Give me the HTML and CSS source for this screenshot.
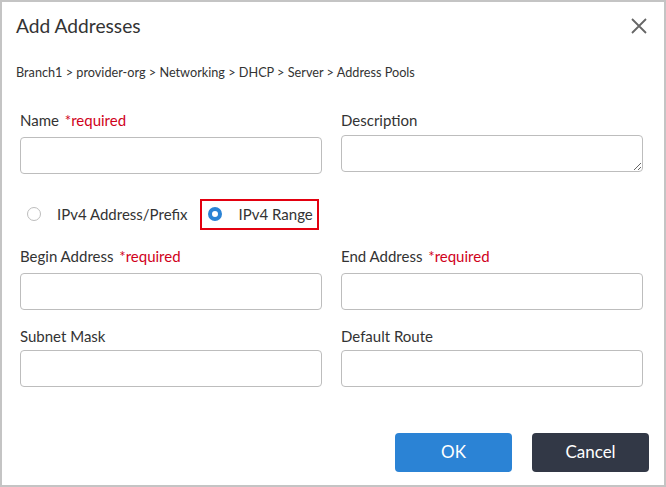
FILE: index.html
```html
<!DOCTYPE html>
<html lang="en">
<head>
    <meta charset="UTF-8">
    <meta name="viewport" content="width=device-width, initial-scale=1.0">
    <title>Add Addresses</title>
    <link rel="stylesheet" href="styles.css">
</head>
<body>
    <div class="dialog">
        <div class="header">
            <h1 class="title">Add Addresses</h1>
            <button class="close" type="button" aria-label="Close">
                <svg width="16" height="16" viewBox="0 0 16 16">
                    <path d="M1 1 L15 15 M15 1 L1 15" stroke="#666" stroke-width="1.8" fill="none"/>
                </svg>
            </button>
        </div>

        <div class="breadcrumb">Branch1 &gt; provider-org &gt; Networking &gt; DHCP &gt; Server &gt; Address Pools</div>

        <form class="form">
            <div class="row">
                <div class="field">
                    <label class="label">Name <span class="required">*required</span></label>
                    <input class="input" type="text">
                </div>
                <div class="field field-area">
                    <label class="label">Description</label>
                    <textarea class="input textarea"></textarea>
                </div>
            </div>

            <div class="radios">
                <label class="option">
                    <span class="radio"></span>
                    <span>IPv4 Address/Prefix</span>
                </label>
                <label class="option option-selected">
                    <span class="radio radio-checked"></span>
                    <span>IPv4 Range</span>
                </label>
            </div>

            <div class="row row-2">
                <div class="field">
                    <label class="label">Begin Address <span class="required">*required</span></label>
                    <input class="input" type="text">
                </div>
                <div class="field">
                    <label class="label">End Address <span class="required">*required</span></label>
                    <input class="input" type="text">
                </div>
            </div>

            <div class="row row-3">
                <div class="field">
                    <label class="label">Subnet Mask</label>
                    <input class="input" type="text">
                </div>
                <div class="field">
                    <label class="label">Default Route</label>
                    <input class="input" type="text">
                </div>
            </div>
        </form>

        <div class="footer">
            <button class="btn btn-ok" type="button">OK</button>
            <button class="btn btn-cancel" type="button">Cancel</button>
        </div>
    </div>
</body>
</html>
```

FILE: styles.css
```css
body {
    margin: 0;
    font-family: 'Lato', 'Liberation Sans', sans-serif;
    color: #333;
    background: #fff;
}

.dialog {
    width: 666px;
    height: 487px;
    box-sizing: border-box;
    border: 2px solid #c4c4c4;
    background: #fff;
}

.header {
    display: flex;
    justify-content: space-between;
    align-items: flex-start;
    padding: 12px 17px 0 14px;
}

.title {
    margin: 0;
    font-size: 19.2px;
    line-height: 24px;
    font-weight: 400;
    color: #333;
}

.close {
    border: none;
    background: none;
    padding: 0;
    margin-top: 4px;
    width: 16px;
    height: 16px;
    cursor: pointer;
}

.close svg {
    display: block;
}

.breadcrumb {
    margin-top: 25.5px;
    padding-left: 14px;
    font-size: 12.7px;
    line-height: 16px;
    color: #333;
}

.form {
    margin-top: 31px;
    padding: 0 21px 0 18px;
}

.row {
    display: grid;
    grid-template-columns: 302px 302px;
    column-gap: 19px;
}

.row-2 {
    margin-top: 17px;
}

.row-3 {
    margin-top: 17px;
}

.field {
    display: flex;
    flex-direction: column;
}

.label {
    font-size: 15px;
    line-height: 19px;
    margin-bottom: 7px;
}

.row-3 .label {
    margin-bottom: 4px;
}

.field-area .label {
    margin-bottom: 5px;
}

.required {
    color: #d0021b;
    margin-left: 2px;
}

.input {
    box-sizing: border-box;
    height: 37px;
    width: 100%;
    margin: 0;
    border: 1px solid #bdbdbd;
    border-radius: 4px;
    background: #fff;
    font-family: inherit;
    font-size: 14px;
    padding: 0 8px;
}

.textarea {
    resize: vertical;
    padding: 6px 8px;
}

.radios {
    display: flex;
    margin-top: 25px;
    gap: 6px;
}

.option {
    display: inline-flex;
    align-items: center;
    box-sizing: border-box;
    height: 31px;
    padding: 0 4px 0 5px;
    border: 2px solid transparent;
    font-size: 15px;
    color: #333;
}

.option-selected {
    border-color: #e3000f;
    padding-left: 6px;
}

.radio {
    box-sizing: border-box;
    width: 14px;
    height: 14px;
    border-radius: 50%;
    border: 1px solid #bdbdbd;
    background: #fff;
    margin-right: 16px;
}

.radio-checked {
    border: 4.5px solid #2b83d5;
    margin-right: 17px;
}

.footer {
    display: flex;
    justify-content: flex-end;
    gap: 20px;
    margin-top: 46px;
    padding-right: 15px;
}

.btn {
    width: 117px;
    height: 39px;
    border: none;
    border-radius: 4px;
    padding: 0 0 2px;
    color: #fff;
    font-family: inherit;
    font-size: 17px;
    cursor: pointer;
}

.btn-ok {
    background: #2b83d5;
}

.btn-cancel {
    background: #323846;
}
```
